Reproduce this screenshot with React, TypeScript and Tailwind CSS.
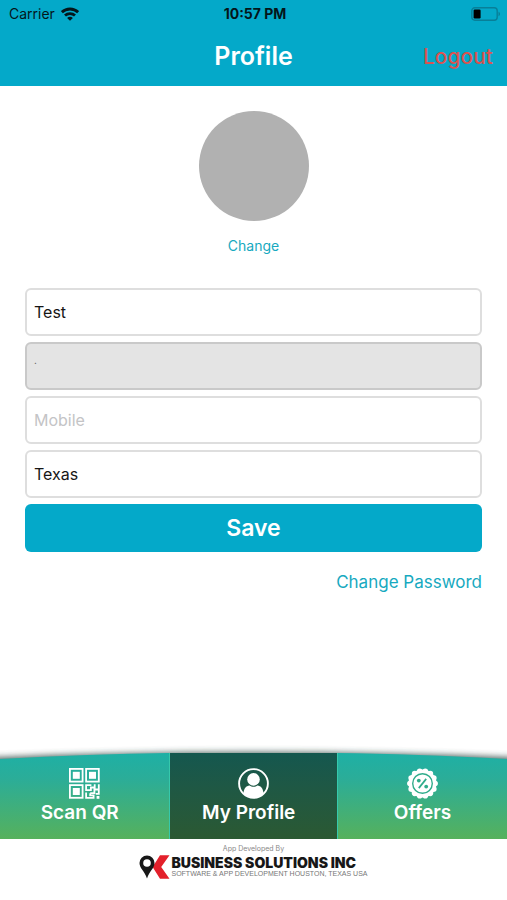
import type { ReactNode } from "react";

function WifiIcon() {
  return (
    <svg viewBox="0 0 18 14" className="h-[14px] w-[18px]" fill="none" stroke="#04161b" strokeWidth="2.8" aria-hidden="true">
      <path d="M.9 5.2C5.4.9 12.6.9 17.1 5.2" />
      <path d="M4 8.6c2.8-2.7 7.2-2.7 10 0" />
      <path d="M9 13.8 6.1 10.9c1.7-1.5 4.1-1.5 5.8 0Z" fill="#04161b" stroke="none" />
    </svg>
  );
}

function BatteryIcon() {
  return (
    <svg viewBox="0 0 30 14" className="h-[14px] w-[30px]" fill="none" aria-hidden="true">
      <rect x="0.8" y="0.8" width="25.4" height="12.4" rx="3" stroke="#087f98" strokeWidth="1.4" />
      <rect x="2.6" y="2.6" width="7" height="8.8" rx="1.2" fill="#000" />
      <path d="M27.5 4.8c2 .7 2 3.7 0 4.4Z" fill="#087f98" />
    </svg>
  );
}

function QrIcon() {
  return (
    <svg viewBox="0 0 31 31" className="h-[31px] w-[31px]" fill="none" stroke="#fff" strokeWidth="1.8" aria-hidden="true">
      <rect x="0.9" y="0.9" width="12.7" height="12.7" />
      <rect x="17.1" y="0.9" width="12.7" height="12.7" />
      <rect x="0.9" y="17.1" width="12.7" height="12.7" />
      <g fill="#fff" stroke="none">
        <rect x="3.8" y="3.8" width="7" height="7" />
        <rect x="20" y="3.8" width="7" height="7" />
        <rect x="3.8" y="20" width="7" height="7" />
        <rect x="27.6" y="28" width="2.8" height="2.8" />
      </g>
      <path d="M22.4 17.1h-5.3v5h4.8v-2.6h3.8v-3.2M29.8 16.3v5.2h-4.4v3.7h-4.2M17.1 24.6v5.2h7.5v-2.4h-3.4v-2.2M29.8 21.5v4.4h-3" />
    </svg>
  );
}

function PersonIcon() {
  return (
    <svg viewBox="0 0 31 31" className="h-[31px] w-[31px]" aria-hidden="true">
      <circle cx="15.5" cy="15.5" r="14.4" fill="none" stroke="#fff" strokeWidth="1.9" />
      <circle cx="15.5" cy="11.4" r="6.3" fill="#fff" />
      <path d="M5.4 25.6c.5-5.2 2.6-8 6.2-8.2 2.3 1.9 5.5 1.9 7.8 0 3.6.2 5.7 3 6.2 8.2-5.5 5.5-14.7 5.5-20.2 0Z" fill="#fff" />
    </svg>
  );
}

function OfferIcon() {
  const scallops = Array.from({ length: 14 }, (_, i) => (i * Math.PI) / 7);
  return (
    <svg viewBox="0 0 31 31" className="h-[31px] w-[31px]" aria-hidden="true">
      <circle cx="15.5" cy="15.5" r="14" fill="#fff" />
      {scallops.map((a) => (
        <circle key={a} cx={15.5 + 12.6 * Math.cos(a)} cy={15.5 + 12.6 * Math.sin(a)} r="2.8" fill="#fff" />
      ))}
      <g fill="none" stroke="#2fac8b">
        <circle cx="15.5" cy="15.5" r="9.8" strokeWidth="1.4" />
        <path d="m19.2 10.9-7.4 9.2" strokeWidth="1.7" />
      </g>
      <circle cx="11.8" cy="12.6" r="1.9" fill="#2fac8b" />
      <circle cx="19.2" cy="18.6" r="1.9" fill="#2fac8b" />
    </svg>
  );
}

function CompanyMark() {
  return (
    <svg viewBox="0 0 31 24" className="h-6 w-[31px]" aria-hidden="true">
      <path d="M21 .3h9.5L22.2 12l8.3 11.7H21L13.6 12Z" fill="#e3202b" />
      <path d="M8 .5a7.5 7.5 0 0 0-7.5 7.6C.5 13.3 5.4 16 8 23.5c2.6-7.5 7.5-10.2 7.5-15.4A7.5 7.5 0 0 0 8 .5Z" fill="#171717" />
      <circle cx="8" cy="8" r="3.8" fill="#fff" />
    </svg>
  );
}

function TabBackdrop() {
  return (
    <svg
      viewBox="0 0 507 86"
      preserveAspectRatio="none"
      className="absolute inset-0 h-full w-full overflow-visible"
      aria-hidden="true"
    >
      <defs>
        <linearGradient id="tabFill" x1="0" y1="0" x2="0" y2="1">
          <stop offset="0" stopColor="#1eb0a5" />
          <stop offset="0.3" stopColor="#2bad98" />
          <stop offset="1" stopColor="#56b15c" />
        </linearGradient>
        <filter id="tabShadow" x="-5%" y="-30%" width="110%" height="160%">
          <feGaussianBlur stdDeviation="3" />
        </filter>
      </defs>
      <path d="M-20 5Q253-7 527 5V70H-20Z" fill="#27433c" opacity="0.8" filter="url(#tabShadow)" />
      <path d="M0 6Q90 1 168 0H337Q415 1 507 6V86H0Z" fill="url(#tabFill)" />
    </svg>
  );
}

function Tab({ label, icon, active = false }: { label: string; icon: ReactNode; active?: boolean }) {
  return (
    <button
      type="button"
      aria-current={active ? "page" : undefined}
      className={
        active
          ? "flex flex-col items-center border-x border-[#36c9ac] bg-linear-to-b from-[#14574f] to-[#2b5932] pt-[15px] text-[19px] font-semibold text-white"
          : "flex flex-col items-center pt-[15px] text-[19px] font-semibold text-white"
      }
    >
      {icon}
      <span className="leading-7 whitespace-pre">{label}</span>
    </button>
  );
}

const fieldClass =
  "h-12 w-full rounded-md border-2 border-[#dedede] bg-white px-[7px] text-base text-[#161616] outline-none placeholder:text-[#c4c4c6]";

export default function App() {
  return (
    <div className="flex min-h-screen flex-col overflow-x-hidden bg-white font-['Inter','Liberation_Sans',sans-serif]">
      <header className="bg-[#04a9c9]">
        <div className="grid h-7 grid-cols-3 items-center pr-1.5 pl-[9px] text-sm text-[#04161b]">
          <div className="flex items-center gap-1.5">
            <span>Carrier</span>
            <WifiIcon />
          </div>
          <time className="text-center font-bold">10:57 PM</time>
          <div className="flex justify-end">
            <BatteryIcon />
          </div>
        </div>
        <div className="grid h-[58px] grid-cols-3 items-center px-[14px]">
          <h1 className="col-start-2 text-center text-[25px] font-semibold text-white">Profile</h1>
          <button type="button" className="justify-self-end text-[21px] font-medium text-[#da5350]">
            Logout
          </button>
        </div>
      </header>

      <main className="flex flex-1 flex-col px-[25px] pt-[25px]">
        <div className="flex flex-col items-center">
          <div className="size-[110px] rounded-full bg-[#b1b1b1]" role="img" aria-label="Profile photo" />
          <button type="button" className="mt-[15px] text-sm leading-5 text-[#17a9c0]">
            Change
          </button>
        </div>
        <form className="mt-8 flex flex-col gap-1.5" onSubmit={(e) => e.preventDefault()}>
          <input aria-label="Name" defaultValue="Test" className={fieldClass} />
          <input
            aria-label="Email"
            readOnly
            defaultValue="."
            className="h-12 w-full rounded-md border-2 border-[#c9c9c9] bg-[#e4e4e4] px-[7px] pb-3 text-[10px] text-[#555] outline-none"
          />
          <input aria-label="Mobile" type="tel" placeholder="Mobile" className={fieldClass} />
          <input aria-label="State" defaultValue="Texas" className={fieldClass} />
          <button type="submit" className="h-12 rounded-md bg-[#04a9c9] text-[23px] font-semibold text-white">
            Save
          </button>
        </form>
        <a href="#change-password" className="mt-[18px] self-end text-[17px] leading-6 text-[#17a9c0]">
          Change Password
        </a>
      </main>

      <nav className="relative h-[86px]" aria-label="Main">
        <TabBackdrop />
        <div className="relative grid h-full grid-cols-3">
          <Tab label={"Scan QR  "} icon={<QrIcon />} />
          <Tab label={"My Profile  "} icon={<PersonIcon />} active />
          <Tab label="Offers" icon={<OfferIcon />} />
        </div>
      </nav>

      <footer className="flex h-[61px] flex-col items-center bg-white pt-1">
        <p className="text-[7px] leading-3 text-[#888]">App Developed By</p>
        <div className="flex items-center gap-px">
          <CompanyMark />
          <div>
            <p className="text-sm leading-[14px] font-black text-[#171717]">BUSINESS SOLUTIONS INC</p>
            <p className="font-['Liberation_Sans',Arial,sans-serif] text-[7px] leading-2 text-[#777]">
              SOFTWARE &amp; APP DEVELOPMENT HOUSTON, TEXAS USA
            </p>
          </div>
        </div>
      </footer>
    </div>
  );
}
